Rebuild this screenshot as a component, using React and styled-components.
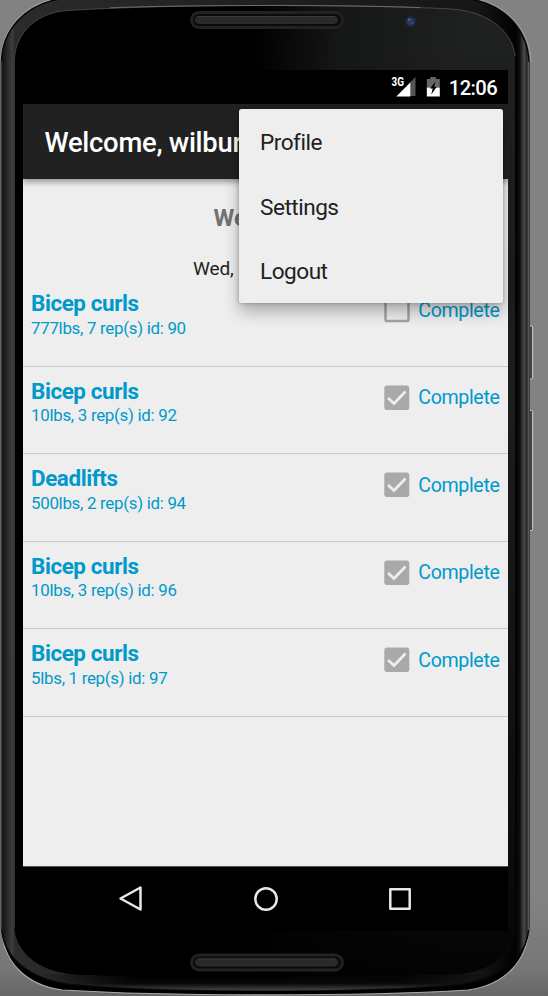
import React from "react";
import styled, { createGlobalStyle } from "styled-components";

const Global = createGlobalStyle`
  * { box-sizing: border-box; }
  body { margin: 0; background: #828282; overflow: hidden; }
`;

const Stage = styled.main`
  position: relative;
  width: 548px;
  height: 996px;
  overflow: hidden;
  background: linear-gradient(#828282 0 900px, #767676 970px, #666 996px);
  font-family: Roboto, sans-serif;
  padding: 70px 40px 65px 23px;
`;

const Shell = styled.svg`
  position: absolute;
  inset: 0;
`;

const Screen = styled.div`
  position: relative;
  display: flex;
  flex-direction: column;
  width: 485px;
  height: 861px;
  background: #000;
`;

const StatusBar = styled.div`
  display: flex;
  flex: 0 0 34px;
  align-items: center;
  justify-content: flex-end;
  padding-right: 11px;
  color: #fff;
`;

const StatusIcons = styled.svg`
  margin-right: 9px;
`;

const Clock = styled.span`
  font-size: 20.2px;
  font-weight: 500;
  letter-spacing: -0.6px;
  line-height: 32px;
  padding-top: 2px;
`;

const AppBar = styled.header`
  position: relative;
  z-index: 1;
  display: flex;
  flex: 0 0 75px;
  align-items: center;
  padding: 2px 0 0 21.5px;
  background: #212121;
  color: #fff;
  box-shadow: 0 3px 6px rgba(0, 0, 0, 0.38);
  clip-path: inset(0 0 -20px 0);
`;

const Title = styled.h1`
  margin: 0;
  font-size: 27.4px;
  font-weight: 500;
  letter-spacing: -0.26px;
  white-space: nowrap;
`;

const Content = styled.section`
  flex: 1;
  background: #eee;
  border-bottom: 1px solid #555;
`;

const Heading = styled.h2`
  height: 100px;
  margin: 0;
  color: #727272;
  font-size: 23.8px;
  line-height: 28px;
  padding: 25px 0 0 190.5px;
`;

const DateLine = styled.span`
  display: block;
  margin: 24px 0 0 -20.5px;
  color: #212121;
  font-size: 19px;
  letter-spacing: -0.1px;
  font-weight: 400;
  line-height: 26px;
`;

const Row = styled.article`
  display: flex;
  justify-content: space-between;
  height: 87.55px;
  padding: 10px 8.5px 0 8px;
  color: #0099cc;
  border-bottom: 1.5px solid #cbcbcb;
`;

const Exercise = styled.h3`
  margin: 0;
  font-size: 22.4px;
  font-weight: 700;
  letter-spacing: -0.4px;
  line-height: 28.5px;
`;

const Detail = styled.p`
  margin: 0.3px 0 0;
  font-size: 16.9px;
  letter-spacing: -0.29px;
  line-height: 20px;
`;

const Check = styled.div`
  display: flex;
  align-items: center;
  gap: 8px;
  height: 42px;
  font-size: 19.6px;
  letter-spacing: -0.36px;
`;

const NavBar = styled.nav`
  flex: 0 0 64px;
  display: grid;
  grid-template-columns: repeat(3, 134.5px);
  justify-content: center;
  align-items: center;
  justify-items: center;
`;

const Menu = styled.div`
  position: absolute;
  z-index: 2;
  top: 39px;
  left: 216px;
  width: 264px;
  height: 194px;
  border-radius: 2.5px;
  background: #eee;
  box-shadow: 0 9px 16px rgba(0, 0, 0, 0.27), 0 0 4px rgba(0, 0, 0, 0.3);
`;

const MenuItem = styled.div`
  height: 64.5px;
  padding-left: 21px;
  padding-top: 2px;
  color: #212121;
  font-size: 22.6px;
  letter-spacing: -0.5px;
  line-height: 64px;
`;

const exercises = [
  ["Bicep curls", "777lbs, 7 rep(s) id: 90", false],
  ["Bicep curls", "10lbs, 3 rep(s) id: 92", true],
  ["Deadlifts", "500lbs, 2 rep(s) id: 94", true],
  ["Bicep curls", "10lbs, 3 rep(s) id: 96", true],
  ["Bicep curls", "5lbs, 1 rep(s) id: 97", true],
];

function CheckBox({ checked }) {
  return (
    <svg width="26" height="26" viewBox="0 0 26 26">
      {checked ? (
        <>
          <rect x="0.3" y="0.5" width="25" height="24.5" rx="2.8" fill="#a9a9a9" />
          <path d="M4 13l6 5.5L21.5 6.500" fill="none" stroke="#eee" strokeWidth="2.7" />
        </>
      ) : (
        <rect x="1.5" y="2" width="23" height="22" rx="1.6" fill="none" stroke="#a3a3a3" strokeWidth="2.5" />
      )}
    </svg>
  );
}

function Slot({ y }) {
  return (
    <g>
      <rect x="190" y={y} width="154" height="18" rx="9" fill="#222" />
      <rect x="193" y={y + 3} width="148" height="12" rx="6" fill="#0b0b0b" />
      <rect x="195" y={y + 5} width="143" height="7.5" rx="3.5" fill="#292929" />
      <path d={`M198 ${y + 5.5}H335`} stroke="#3b3b3b" />
      <path d={`M198 ${y + 12.5}H335`} stroke="#333" strokeWidth="0.7" />
    </g>
  );
}

const OUTER =
  "M1.5 62C2 31 24 5 60 -1C170 -11 360 -11 470 -1C506 5 528 31 529 62V926C528 953 507 978 460 984.5C360 992.5 170 992.5 70 984.5C23 978 2 953 1.5 926Z";
const FACE =
  "M14.5 58C16 32 38 12 68 10.5C170 4 360 4 451 9C488 11 513 32 515 56V928C513 953 494 970 461 974C360 979 170 979 70 974C38 970 16 952 14.5 928Z";

function PhoneShell() {
  return (
    <Shell width="548" height="996" viewBox="0 0 548 996">
      <defs>
        <linearGradient id="rim" gradientUnits="userSpaceOnUse" x1="1" x2="529">
          <stop offset="0" stopColor="#4a4a4a" />
          <stop offset=".004" stopColor="#151515" />
          <stop offset=".012" stopColor="#292929" />
          <stop offset=".022" stopColor="#3d3d3d" />
          <stop offset=".026" stopColor="#2b2b2b" />
          <stop offset=".1" stopColor="#292929" />
          <stop offset=".9" stopColor="#161616" />
          <stop offset=".974" stopColor="#010101" />
          <stop offset=".982" stopColor="#0d0d0d" />
          <stop offset=".991" stopColor="#4a4a4a" />
          <stop offset=".996" stopColor="#252525" />
          <stop offset="1" stopColor="#666" />
        </linearGradient>
        <linearGradient id="shine" x1=".48" y1="0" x2=".9" y2=".01">
          <stop offset="0" stopColor="#000" />
          <stop offset=".4" stopColor="#151616" />
          <stop offset="1" stopColor="#1f2020" />
        </linearGradient>
        <linearGradient id="fade" x1="0" y1="0" x2="0" y2="1">
          <stop offset="0" stopColor="#000" stopOpacity="0" />
          <stop offset=".45" stopColor="#000" stopOpacity=".15" />
          <stop offset=".88" stopColor="#000" stopOpacity=".65" />
          <stop offset="1" stopColor="#000" stopOpacity=".9" />
        </linearGradient>
        <linearGradient id="foot" x1="0" y1="0" x2="0" y2="1">
          <stop offset="0" stopColor="#000" />
          <stop offset=".55" stopColor="#080808" />
          <stop offset=".85" stopColor="#333" />
          <stop offset="1" stopColor="#4c4c4c" />
        </linearGradient>
        <linearGradient id="ends">
          <stop offset="0" stopColor="#fff" stopOpacity="0" />
          <stop offset=".2" stopColor="#fff" />
          <stop offset=".8" stopColor="#fff" />
          <stop offset="1" stopColor="#fff" stopOpacity="0" />
        </linearGradient>
        <mask id="footMask"><rect x="40" y="960" width="450" height="36" fill="url(#ends)" /></mask>
        <clipPath id="body"><path d={OUTER} /></clipPath>
      </defs>
      <path d="M1.5 926C2 961 25 985 62 990C170 996.5 360 996.5 468 990C505 985 528 961 529 926" fill="#000" stroke="#aaa" strokeWidth="1.1" />
      <path d="M0.5 62C1 30 23 4 58 -2M531 62C530 30 507 4 472 -2" fill="none" stroke="#a8a8a8" strokeWidth=".8" />
      <path d={OUTER} fill="url(#rim)" stroke="#080808" strokeWidth="1.5" />
      <g clipPath="url(#body)">
        <rect x="40" y="974" width="450" height="17" fill="url(#foot)" mask="url(#footMask)" />
      </g>
      <path d={FACE} fill="url(#shine)" />
      <path d={FACE} fill="url(#fade)" />
      <path d="M14.5 58C16 32 38 12 68 10.5C170 4 360 4 451 9C488 11 513 32 515 56" fill="none" stroke="#505050" strokeWidth=".8" />
      <path d="M110 7.8C180 4.8 345 4.8 420 7.6" fill="none" stroke="#808080" strokeWidth=".7" />
      <path d="M14.4 58V928" stroke="#444" strokeWidth=".8" />
      <path d="M1 62V930" stroke="#666" />
      <path d="M528.8 62V930" stroke="#888" strokeWidth=".8" />
      <Slot y={11} />
      <Slot y={953.5} />
      <circle cx="411" cy="21.7" r="8.2" fill="#1c1c1e" />
      <circle cx="411" cy="21.7" r="5.8" fill="#1d2538" />
      <circle cx="410.5" cy="21.5" r="3.8" fill="#2b3a5c" />
      <circle cx="409" cy="19.5" r="1" fill="#56719f" />
      <circle cx="412.5" cy="23" r=".8" fill="#44618f" />
      <path d="M530 326h1.5q1.2 0 1.2 2v49q0 2-1.2 2H530M530 410.5h1.5q1.2 0 1.2 2v116q0 2-1.2 2H530" fill="#444" stroke="#d0d0d0" strokeWidth="1" />
    </Shell>
  );
}

export default function App() {
  return (
    <>
      <Global />
      <Stage>
        <PhoneShell />
        <Screen>
          <StatusBar>
            <StatusIcons width="50" height="24" viewBox="390 75 50 24">
              <text x="391.5" y="86.3" fill="#fff" fontFamily="Roboto" fontWeight="700" fontSize="12" textLength="12.5" lengthAdjust="spacingAndGlyphs">3G</text>
              <path d="M415.5 77V96H409V83.5Z" fill="#555" />
              <path d="M410.3 82.5V96.500H396.300Z" fill="#fff" />
              <path d="M430.3 77h5.500v2h4v8.500h-13V79h3.500Z" fill="#666" />
              <path d="M426.8 87.500h13V96.500h-13Z" fill="#fff" />
              <path d="M435.5 81.500l-5.500 7h2.700l-1.500 6 5.500-7.500h-2.500Z" fill="#000" />
            </StatusIcons>
            <Clock>12:06</Clock>
          </StatusBar>
          <AppBar><Title>Welcome, wilbur</Title></AppBar>
          <Content>
            <Heading>We<DateLine>Wed,</DateLine></Heading>
            {exercises.map(([name, detail, done]) => (
              <Row key={detail}>
                <div>
                  <Exercise>{name}</Exercise>
                  <Detail>{detail}</Detail>
                </div>
                <Check><CheckBox checked={done} />Complete</Check>
              </Row>
            ))}
          </Content>
          <NavBar>
            <svg width="28" height="28" viewBox="0 0 28 28" fill="none" stroke="#e8e8e8" strokeWidth="2.5" strokeLinejoin="round"><path d="M23.5 2.500V24.500L3.500 13.500Z" /></svg>
            <svg width="28" height="28" viewBox="0 0 28 28" fill="none" stroke="#e8e8e8" strokeWidth="2.5"><circle cx="14" cy="14" r="10.7" /></svg>
            <svg width="28" height="28" viewBox="0 0 28 28" fill="none" stroke="#e8e8e8" strokeWidth="2.5" strokeLinejoin="round"><path d="M4.3 4.300H23.700V23.700H4.300Z" /></svg>
          </NavBar>
          <Menu>
            <MenuItem>Profile</MenuItem>
            <MenuItem>Settings</MenuItem>
            <MenuItem>Logout</MenuItem>
          </Menu>
        </Screen>
      </Stage>
    </>
  );
}
